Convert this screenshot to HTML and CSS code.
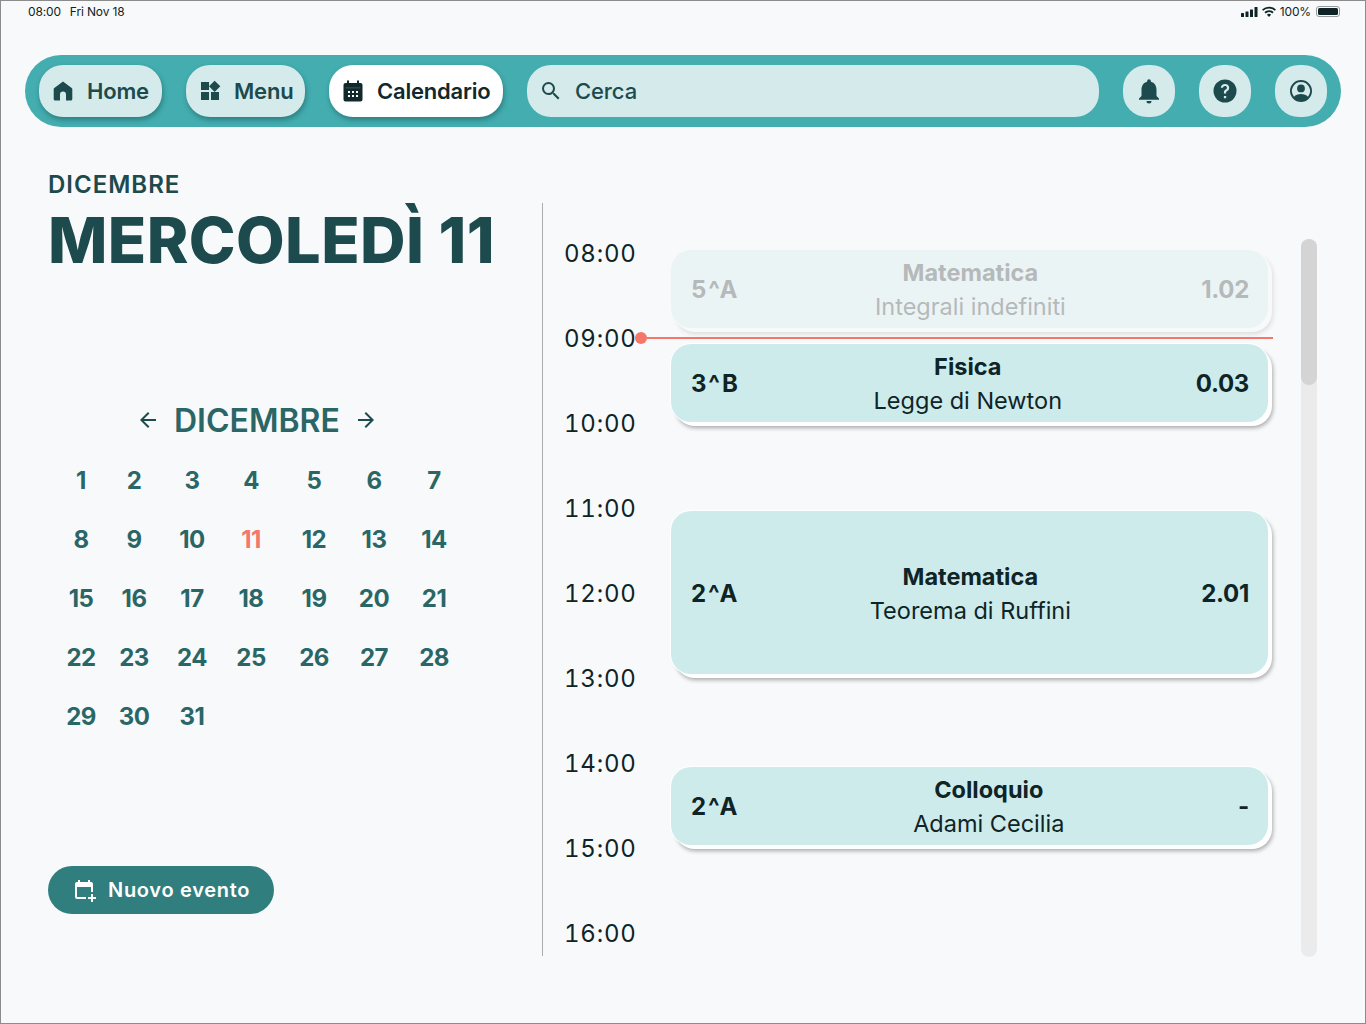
FILE: index.html

```html
<!DOCTYPE html>
<html lang="it">
<head>
    <meta charset="UTF-8">
    <meta name="viewport" content="width=device-width, initial-scale=1.0">
    <title>Calendario</title>
    <link rel="stylesheet" href="styles.css">
</head>
<body>
<div class="screen">
    <div class="status-bar">
        <div class="status-left"><span>08:00</span><span>Fri Nov 18</span></div>
        <div class="status-right">
            <svg width="17" height="10" viewBox="0 0 17 10"><rect x="0" y="6" width="3" height="4" rx=".5"/><rect x="4.5" y="4.5" width="3" height="5.5" rx=".5"/><rect x="9" y="2.5" width="3" height="7.5" rx=".5"/><rect x="13.5" y="0" width="3" height="10" rx=".5"/></svg>
            <svg width="14" height="11" viewBox="0 0 14 11"><path d="M7 11 4.9 8.7a3 3 0 0 1 4.2 0zM3.7 7.4 2.4 6a6.8 6.8 0 0 1 9.2 0l-1.3 1.4a4.9 4.9 0 0 0-6.6 0zM1.2 4.8 0 3.4a10.3 10.3 0 0 1 14 0l-1.2 1.4a8.5 8.5 0 0 0-11.6 0z"/></svg>
            <span>100%</span>
            <div class="battery"><div class="battery-fill"></div></div>
        </div>
    </div>

    <nav class="nav">
        <a class="pill pill-home">
            <svg class="icon" viewBox="0 0 24 24"><path d="M12 2.500 3.300 8.900A1.500 1.500 0 0 0 2.700 10.100V20a1.500 1.500 0 0 0 1.500 1.500H9v-6a3 3 0 0 1 6 0v6h4.800a1.500 1.500 0 0 0 1.500-1.500V10.100a1.500 1.500 0 0 0-.6-1.200z"/></svg>
            <span>Home</span>
        </a>
        <a class="pill pill-menu">
            <svg class="icon" viewBox="0 0 24 24"><path d="M13 13v8h8v-8h-8zM3 21h8v-8H3v8zM3 3v8h8V3H3zm13.660-1.310L11 7.340 16.660 13l5.660-5.660-5.660-5.650z"/></svg>
            <span>Menu</span>
        </a>
        <a class="pill pill-active">
            <svg class="icon" viewBox="0 0 24 24"><path d="M19.500 4H18V1.500h-2V4H8V1.500H6V4H4.500a2 2 0 0 0-2 2v14.500a2 2 0 0 0 2 2h15a2 2 0 0 0 2-2V6a2 2 0 0 0-2-2z"/><path fill="#fff" d="M4.500 8.500h15v.8h-15z" opacity=".25"/><g fill="#fff"><rect x="7" y="12" width="2" height="2"/><rect x="11" y="12" width="2" height="2"/><rect x="15" y="12" width="2" height="2"/><rect x="7" y="16" width="2" height="2"/><rect x="11" y="16" width="2" height="2"/><rect x="15" y="16" width="2" height="2"/></g></svg>
            <span>Calendario</span>
        </a>
        <div class="search">
            <svg class="icon" viewBox="0 0 24 24"><path d="M15.500 14h-.79l-.28-.27A6.470 6.470 0 0 0 16 9.500 6.500 6.500 0 1 0 9.500 16c1.610 0 3.090-.59 4.230-1.570l.27.28v.79l5 4.990L20.490 19l-4.990-5zm-6 0C7.010 14 5 11.990 5 9.500S7.010 5 9.500 5 14 7.010 14 9.500 11.990 14 9.500 14z"/></svg>
            <span>Cerca</span>
        </div>
        <a class="round">
            <svg class="icon icon-bell" viewBox="0 0 24 24"><path d="M12 22a2 2 0 0 0 2-2h-4a2 2 0 0 0 2 2zm6-6v-5c0-3.070-1.640-5.640-4.500-6.320V4a1.500 1.500 0 0 0-3 0v.68C7.630 5.360 6 7.920 6 11v5l-2 2v1h16v-1l-2-2z"/></svg>
        </a>
        <a class="round">
            <svg class="icon" viewBox="0 0 24 24"><circle cx="12" cy="12" r="11.500"/><path fill="#d4eaeb" d="M10.900 17h2.300v2.200h-2.300zM12 5c-2.400 0-4.100 1.500-4.200 3.800h2.200c.1-1.100.9-1.800 2-1.800 1.100 0 1.900.7 1.900 1.700 0 .8-.4 1.300-1.300 1.900-1.200.8-1.700 1.700-1.700 3v.8h2.200v-.5c0-.8.300-1.300 1.200-1.900 1.200-.8 1.900-1.800 1.900-3.300C16.200 6.500 14.500 5 12 5z"/></svg>
        </a>
        <a class="round">
            <svg class="icon" viewBox="0 0 24 24"><path d="M12 1a11 11 0 1 0 0 22 11 11 0 0 0 0-22zm0 2a9 9 0 0 1 7 14.650C17.400 15.800 14.800 15 12 15s-5.400.8-7 2.650A9 9 0 0 1 12 3zm0 2.500a3.900 3.900 0 1 0 0 7.800 3.900 3.900 0 0 0 0-7.800z"/></svg>
        </a>
    </nav>

    <main class="main">
        <section class="left">
            <div class="month-label">DICEMBRE</div>
            <h1 class="day-title">MERCOLEDÌ 11</h1>

            <div class="cal-head">
                <svg class="arrow" viewBox="0 0 24 24"><path d="M20 11H7.830l5.590-5.590L12 4l-8 8 8 8 1.410-1.410L7.830 13H20v-2z"/></svg>
                <span>DICEMBRE</span>
                <svg class="arrow" viewBox="0 0 24 24"><path d="M12 4l-1.410 1.410L16.170 11H4v2h12.170l-5.580 5.590L12 20l8-8z"/></svg>
            </div>
            <div class="cal-grid">
                <span>1</span><span>2</span><span>3</span><span>4</span><span>5</span><span>6</span><span>7</span>
                <span>8</span><span>9</span><span>10</span><span class="today">11</span><span>12</span><span>13</span><span>14</span>
                <span>15</span><span>16</span><span>17</span><span>18</span><span>19</span><span>20</span><span>21</span>
                <span>22</span><span>23</span><span>24</span><span>25</span><span>26</span><span>27</span><span>28</span>
                <span>29</span><span>30</span><span>31</span>
            </div>

            <button class="new-event" type="button">
                <svg width="24" height="24" viewBox="0 0 24 24"><path fill="#fff" d="M19 4h-1V2h-2v2H8V2H6v2H5a2 2 0 0 0-2 2v13a2 2 0 0 0 2 2h9v-2H5V9h14v5h2V6a2 2 0 0 0-2-2zM19 16v3h-3v2h3v3h2v-3h3v-2h-3v-3z"/></svg>
                <span>Nuovo evento</span>
            </button>
        </section>

        <div class="divider"></div>

        <section class="schedule">
            <div class="hours">
                <div>08:00</div><div>09:00</div><div>10:00</div><div>11:00</div><div>12:00</div>
                <div>13:00</div><div>14:00</div><div>15:00</div><div>16:00</div>
            </div>
            <div class="events">
                <div class="event event-past">
                    <b class="event-class">5^A</b>
                    <div class="event-text"><b>Matematica</b><span>Integrali indefiniti</span></div>
                    <b class="event-room">1.02</b>
                </div>
                <div class="event event-fisica">
                    <b class="event-class">3^B</b>
                    <div class="event-text"><b>Fisica</b><span>Legge di Newton</span></div>
                    <b class="event-room">0.03</b>
                </div>
                <div class="event event-long">
                    <b class="event-class">2^A</b>
                    <div class="event-text"><b>Matematica</b><span>Teorema di Ruffini</span></div>
                    <b class="event-room">2.01</b>
                </div>
                <div class="event event-last">
                    <b class="event-class">2^A</b>
                    <div class="event-text"><b>Colloquio</b><span>Adami Cecilia</span></div>
                    <b class="event-room">-</b>
                </div>
            </div>
            <div class="now-line"></div>
            <div class="scroll-track"><div class="scroll-thumb"></div></div>
        </section>
    </main>
</div>
</body>
</html>
```

FILE: styles.css

```css
* {
    box-sizing: border-box;
}
body {
    margin: 0;
    font-family: Inter, "Liberation Sans", sans-serif;
    background: #f8f9fb;
    color: #0f2426;
}
.screen {
    width: 1366px;
    height: 1024px;
    border: 1px solid #8c8c8c;
    background: #f8f9fb;
    overflow: hidden;
}

/* status bar */
.status-bar {
    height: 24px;
    padding: 0 25px 3px 27px;
    display: flex;
    justify-content: space-between;
    align-items: center;
    font-size: 12px;
    letter-spacing: -0.15px;
}
.status-left {
    display: flex;
    gap: 9px;
}
.status-right {
    display: flex;
    align-items: center;
    gap: 4px;
}
.status-right svg {
    fill: #0f2426;
}
.battery {
    width: 24px;
    height: 11px;
    border: 1px solid #9a9a9a;
    border-radius: 3px;
    padding: 1px;
    margin-left: 1px;
}
.battery-fill {
    height: 100%;
    background: #0f2426;
    border-radius: 1.5px;
}

/* top nav */
.nav {
    margin: 30px 24px 0;
    height: 72px;
    padding: 10px 14px;
    border-radius: 36px;
    background: #43adb0;
    display: flex;
    align-items: center;
    gap: 24px;
}
.pill, .search, .round {
    height: 52px;
    border-radius: 24px;
    background: #d4eaeb;
    display: flex;
    align-items: center;
    flex-shrink: 0;
    color: #1d4a4c;
    font-size: 22px;
    font-weight: 600;
    letter-spacing: -0.2px;
}
.pill {
    gap: 12px;
    padding-left: 12px;
    box-shadow: 1px 3px 5px rgba(20, 70, 70, 0.45);
}
.pill-home { width: 123px; }
.pill-menu { width: 119px; }
.pill-active {
    width: 174px;
    background: #fff;
    color: #12292b;
}
.search {
    flex: 1;
    gap: 12px;
    padding-left: 12px;
    font-weight: 500;
    letter-spacing: -0.1px;
}
.round {
    width: 52px;
    justify-content: center;
}
.icon {
    width: 24px;
    height: 24px;
    fill: #1d4a4c;
    flex-shrink: 0;
}
.icon-bell {
    width: 30px;
    height: 30px;
}
.pill-active .icon {
    fill: #12292b;
}

/* main area */
.main {
    display: flex;
    height: 797px;
    margin-top: 33px;
}
.left {
    width: 494px;
    margin-left: 47px;
    flex-shrink: 0;
}
.month-label {
    font-size: 24px;
    line-height: 30px;
    margin-top: 10px;
    font-weight: 600;
    letter-spacing: 1px;
    color: #1d4a4c;
}
.day-title {
    margin: 0;
    font-size: 63px;
    line-height: 80px;
    font-weight: 800;
    letter-spacing: 0.4px;
    color: #1d4a4c;
}
.cal-head {
    margin-top: 120px;
    padding-left: 88px;
    display: flex;
    align-items: center;
    gap: 14px;
    height: 40px;
    font-size: 32px;
    font-weight: 600;
    color: #2a6666;
}
.arrow {
    width: 24px;
    height: 24px;
    fill: #1d4a4c;
}
.cal-grid {
    margin-top: 11px;
    margin-left: 7px;
    display: grid;
    grid-template-columns: 52px 54px 62px 56px 70px 50px 70px;
    grid-auto-rows: 59px;
    align-items: center;
    text-align: center;
    font-size: 24px;
    font-weight: 700;
    letter-spacing: -0.5px;
    color: #2a6666;
}
.today {
    color: #f5776b;
}
.new-event {
    margin-top: 120px;
    width: 226px;
    height: 48px;
    border: none;
    border-radius: 24px;
    background: #317e7e;
    color: #fff;
    font-family: inherit;
    font-size: 20px;
    font-weight: 600;
    letter-spacing: 0.7px;
    display: flex;
    align-items: center;
    gap: 12px;
    padding-left: 24px;
}

.divider {
    width: 1px;
    margin-top: 43px;
    margin-bottom: 1px;
    background: #a9adb0;
    flex-shrink: 0;
}

/* schedule */
.schedule {
    position: relative;
    flex: 1;
    display: flex;
}
.hours {
    width: 70px;
    margin-left: 21px;
    padding-top: 51px;
    flex-shrink: 0;
    text-align: right;
    font-size: 24px;
    line-height: 85px;
    letter-spacing: 0.8px;
    font-variant-numeric: tabular-nums;
    color: #0f2426;
}
.events {
    width: 597px;
    margin-left: 37px;
    padding-top: 90px;
    flex-shrink: 0;
}
.event {
    height: 78px;
    padding: 2px 19px 0 20px;
    border-radius: 20px;
    background: #ceebec;
    display: flex;
    justify-content: space-between;
    align-items: center;
    font-size: 23.5px;
    line-height: 34px;
    box-shadow: 0 0 0 1px #fff, 4px 4px 0 #fff, 5px 6px 4px rgba(0, 0, 0, 0.32);
}
.event b {
    font-weight: 700;
}
.event-class {
    font-size: 24px;
    letter-spacing: 2px;
}
.event-room {
    font-size: 24px;
    letter-spacing: -0.3px;
}
.event-text {
    display: flex;
    flex-direction: column;
    align-items: center;
}
.event-past {
    background: #ebf4f5;
    color: #b5b9ba;
    box-shadow: 0 0 0 1px #f8f9fb, 4px 4px 0 #f8f9fb, 5px 6px 5px rgba(0, 0, 0, 0.12);
}
.event-fisica { margin-top: 16px; }
.event-long {
    margin-top: 89px;
    height: 163px;
}
.event-last { margin-top: 93px; }
.now-line {
    position: absolute;
    left: 98px;
    top: 177px;
    width: 632px;
    height: 2px;
    background: #f5776b;
}
.now-line::before {
    content: "";
    position: absolute;
    left: -6px;
    top: -5px;
    width: 12px;
    height: 12px;
    border-radius: 50%;
    background: #f5776b;
}
.scroll-track {
    position: absolute;
    left: 758px;
    top: 79px;
    width: 16px;
    height: 718px;
    border-radius: 8px;
    background: #ebebeb;
}
.scroll-thumb {
    height: 146px;
    border-radius: 8px;
    background: #d4d4d4;
}
```
